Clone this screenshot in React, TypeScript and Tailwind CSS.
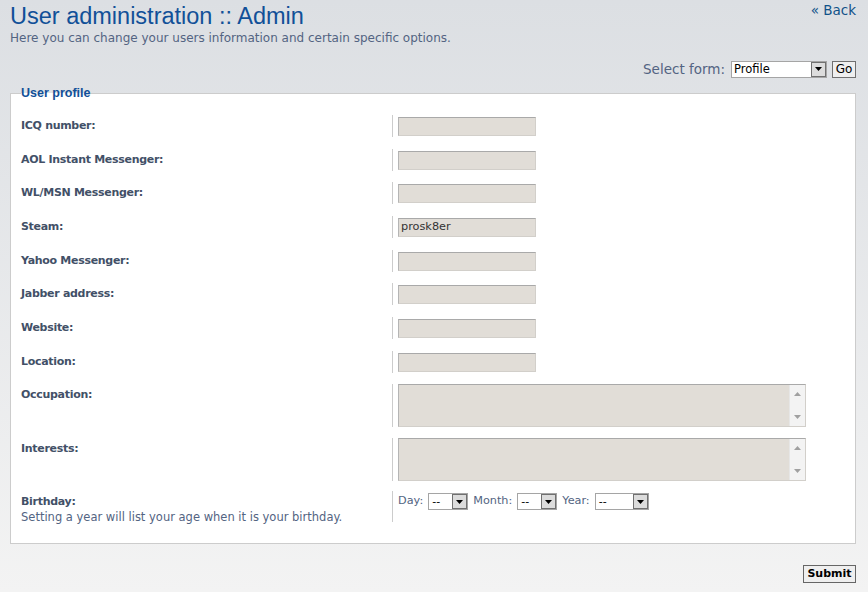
import React from "react";

const FONT = { fontFamily: '"DejaVu Sans", Verdana, sans-serif' };

function Arrow() {
  return (
    <div className="w-[15px] h-[15px] shrink-0 border border-[#707070] bg-[#dcdcdc] flex items-center justify-center">
      <svg width="7" height="4" viewBox="0 0 7 4">
        <polygon points="0,0 7,0 3.5,4" fill="#000" />
      </svg>
    </div>
  );
}

function FakeSelect({ value, width }: { value: string; width: string }) {
  return (
    <div className={`${width} h-[17px] flex items-center justify-between border border-[#a5a5a5] bg-white`}>
      <span className="pl-[3px] text-[11px] leading-[13px] text-black">{value}</span>
      <Arrow />
    </div>
  );
}

function Row({ label, value }: { label: string; value?: string }) {
  return (
    <div className="flex py-[5.85px]">
      <div className="w-[371px] shrink-0 pt-[4px] text-[11px] tracking-[-0.3px] leading-[14px] font-bold text-[#425067]">{label}</div>
      <div className="border-l border-[#cccccc] pl-[5px] pt-[2px] pb-[1px]">
        <div className="w-[138px] h-[19px] bg-[#e1ddd7] border border-[#d2cfca] border-t-[#a9a9a9] border-l-[#b5b5b5] px-[2px] flex items-center text-[11.3px] text-[#333333]">
          {value}
        </div>
      </div>
    </div>
  );
}

function TextRow({ label }: { label: string }) {
  return (
    <div className="flex py-[5.5px]">
      <div className="w-[371px] shrink-0 pt-[4px] text-[11px] tracking-[-0.3px] leading-[14px] font-bold text-[#425067]">{label}</div>
      <div className="border-l border-[#cccccc] pl-[5px]">
        <div className="w-[408px] h-[43px] bg-[#e1ddd7] border border-[#d2cfca] border-t-[#a9a9a9] border-l-[#b5b5b5] flex justify-end">
          <div className="w-[16px] h-full bg-[#f3f3f3] border-l border-[#e6e6e6] flex flex-col items-center justify-between py-[7px]">
            <svg width="7" height="4" viewBox="0 0 7 4">
              <polygon points="0,4 7,4 3.5,0" fill="#a0a0a0" />
            </svg>
            <svg width="7" height="4" viewBox="0 0 7 4">
              <polygon points="0,0 7,0 3.5,4" fill="#a0a0a0" />
            </svg>
          </div>
        </div>
      </div>
    </div>
  );
}

export default function App() {
  const rows: [string, string][] = [
    ["ICQ number:", ""],
    ["AOL Instant Messenger:", ""],
    ["WL/MSN Messenger:", ""],
    ["Steam:", "prosk8er"],
    ["Yahoo Messenger:", ""],
    ["Jabber address:", ""],
    ["Website:", ""],
    ["Location:", ""],
  ];
  return (
    <div
      className="min-h-[592px] w-full bg-gradient-to-b from-[#dcdfe3] to-[#f3f3f3] pl-[10px] pr-[12px]"
      style={FONT}
    >
      <div className="flex justify-between">
        <div>
          <h2
            className="pt-[2px] text-[23.5px] leading-[28px] text-[#115098]"
            style={{ fontFamily: '"Liberation Sans", Arial, sans-serif' }}
          >
            User administration :: Admin
          </h2>
          <p className="mt-[1px] text-[12px] leading-[15px] text-[#536482]">
            Here you can change your users information and certain specific options.
          </p>
        </div>
        <div className="pt-[2px] text-[13.5px] leading-[16px] text-[#105289]">« Back</div>
      </div>

      <div className="mt-[14px] flex items-center justify-end h-[18px]">
        <span className="text-[13.5px] text-[#536482] mr-[6px]">Select form:</span>
        <div className="w-[96px] h-[17px] flex items-center justify-between border border-[#a5a5a5] bg-white">
          <span className="pl-[2px] text-[11.5px] leading-[13px] text-black">Profile</span>
          <Arrow />
        </div>
        <button className="ml-[5px] w-[24px] h-[17px] border border-[#707070] bg-[#efefef] text-[12px] leading-[14px] text-black flex items-center justify-center">
          Go
        </button>
      </div>

      <fieldset className="mt-[8px] border border-[#cccccc] bg-white pl-[10px] pr-[10px] pt-[9px] pb-[14px]">
        <legend
          className="text-[12.5px] leading-[14px] font-bold text-[#115098]"
          style={{ fontFamily: '"Liberation Sans", Arial, sans-serif' }}
        >
          User profile
        </legend>
        {rows.map(([l, v]) => (
          <Row key={l} label={l} value={v} />
        ))}
        <TextRow label="Occupation:" />
        <TextRow label="Interests:" />
        <div className="flex py-[4.5px]">
          <div className="w-[371px] shrink-0 pt-[4px] leading-[14.5px] text-[#536482]">
            <div className="text-[11px] tracking-[-0.3px] font-bold text-[#425067]">Birthday:</div>
            <div className="text-[11.5px]">Setting a year will list your age when it is your birthday.</div>
          </div>
          <div className="border-l border-[#cccccc] pl-[5px] pt-[2px] h-[31px]">
            <div className="flex items-center gap-[5px] text-[11.25px] text-[#536482]">
              <span>Day:</span>
              <FakeSelect value="--" width="w-[40px]" />
              <span>Month:</span>
              <FakeSelect value="--" width="w-[40px]" />
              <span>Year:</span>
              <FakeSelect value="--" width="w-[54px]" />
            </div>
          </div>
        </div>
      </fieldset>

      <div className="mt-[21px] flex justify-end">
        <button className="w-[53px] h-[18px] border border-[#666666] bg-[#efefef] text-[11px] leading-[14px] font-bold text-black flex items-center justify-center">
          Submit
        </button>
      </div>
    </div>
  );
}
